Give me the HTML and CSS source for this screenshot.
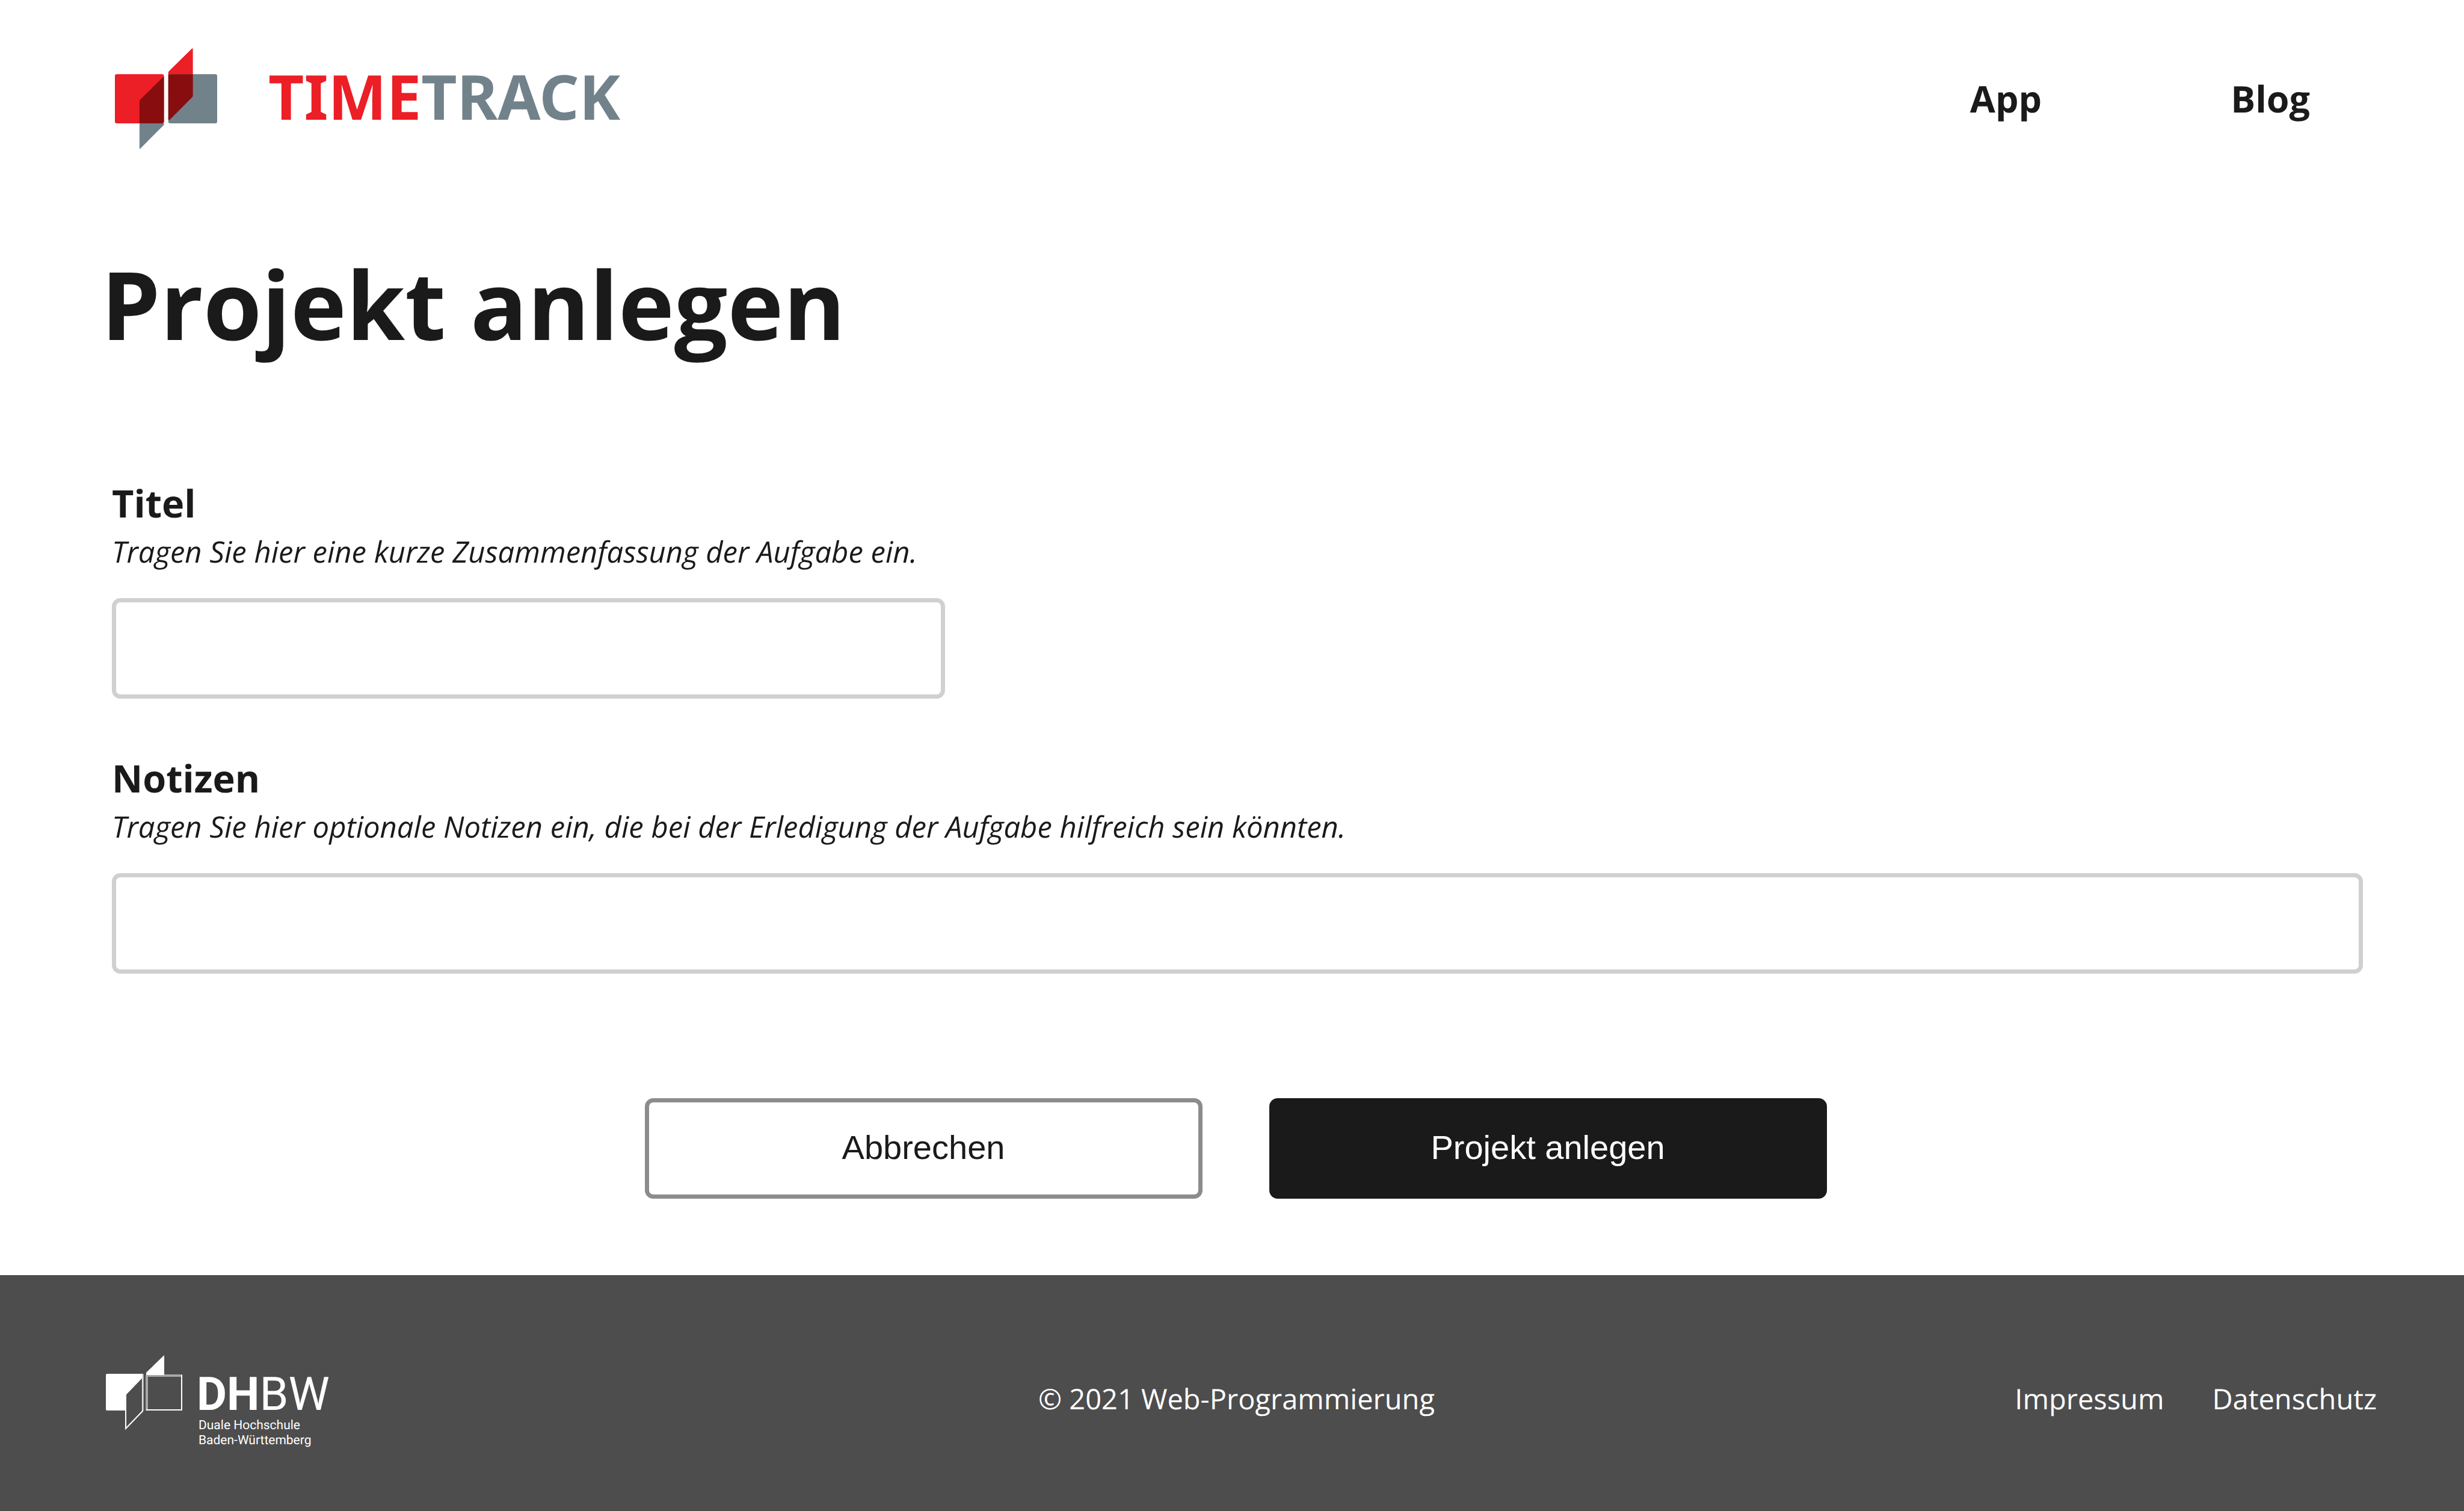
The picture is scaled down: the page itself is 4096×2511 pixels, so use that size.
FILE: index.html
```html
<!DOCTYPE html>
<html lang="de">
<head>
  <meta charset="utf-8">
  <meta name="viewport" content="width=device-width, initial-scale=1">
  <title>Timetrack – Projekt anlegen</title>
  <link rel="stylesheet" href="styles.css">
</head>
<body>
  <header class="header">
    <a class="brand" href="#">
      <svg class="brand-mark" viewBox="115 122 636 625" aria-hidden="true">
        <rect x="115" y="282" width="305" height="306" rx="12" fill="#ec1e26"/>
        <rect x="447" y="282" width="304" height="306" rx="12" fill="#71828b"/>
        <path d="M268 588H420V597L272 746H268Z" fill="#71828b"/>
        <path d="M268 451Q268 445 272 441L417 298L420 300V576Q420 588 408 588H268Z" fill="#880d0f"/>
        <path d="M447 282V272Q448 266 452 262L594 123Q600 120 600 127V282Z" fill="#ec1e26"/>
        <path d="M447 282H600V414Q600 420 596 425L456 565Q449 571 447 563Z" fill="#880d0f"/>
      </svg>
      <span class="brand-name"><span class="brand-accent">TIME</span>TRACK</span>
    </a>
    <nav class="nav">
      <a href="#">App</a>
      <a href="#">Blog</a>
    </nav>
  </header>

  <main class="main">
    <h1 class="title">Projekt anlegen</h1>
    <form class="form">
      <div class="field">
        <label class="field-label" for="titel">Titel</label>
        <p class="field-hint" id="titel-hint">Tragen Sie hier eine kurze Zusammenfassung der Aufgabe ein.</p>
        <input class="field-input field-input-short" id="titel" type="text" aria-describedby="titel-hint">
      </div>
      <div class="field">
        <label class="field-label" for="notizen">Notizen</label>
        <p class="field-hint" id="notizen-hint">Tragen Sie hier optionale Notizen ein, die bei der Erledigung der Aufgabe hilfreich sein könnten.</p>
        <input class="field-input" id="notizen" type="text" aria-describedby="notizen-hint">
      </div>
      <div class="actions">
        <button class="button" type="button">Abbrechen</button>
        <button class="button button-primary" type="submit">Projekt anlegen</button>
      </div>
    </form>
  </main>

  <footer class="footer">
    <svg class="footer-logo" viewBox="-16 0 386 146">
      <path d="M2 32H62V36L33 66V93H2Q0 93 0 91V34Q0 32 2 32Z" fill="#fff"/>
      <path d="M33 66L61 37V94L33 123Z" fill="none" stroke="#fff" stroke-width="2"/>
      <path d="M62 33V93" stroke="#b5b5b5" stroke-width="2"/>
      <path d="M68 93V34M67 35H127" fill="none" stroke="#a8a8a8" stroke-width="4"/>
      <path d="M67 92H126V34" fill="none" stroke="#fff" stroke-width="2"/>
      <path d="M67 34V30L97 1V34Z" fill="#fff"/>
      <text class="logo-name" x="151" y="92"><tspan class="logo-strong">DH</tspan>BW</text>
      <text class="logo-line" x="154" y="124">Duale Hochschule</text>
      <text class="logo-line" x="154" y="149">Baden-Württemberg</text>
    </svg>
    <p class="copyright">© 2021 Web-Programmierung</p>
    <nav class="footer-nav">
      <a href="#">Impressum</a>
      <a href="#">Datenschutz</a>
    </nav>
  </footer>
</body>
</html>
```
FILE: styles.css
```css
* {
  box-sizing: border-box;
}

body {
  margin: 0;
  min-height: 100vh;
  display: flex;
  flex-direction: column;
  background: #fff;
  color: #1a1a1a;
  font-family: "Open Sans", "Noto Sans", sans-serif;
  text-rendering: geometricPrecision;
}

a {
  color: inherit;
  text-decoration: none;
}

.header {
  display: flex;
  align-items: center;
  justify-content: space-between;
  padding: 80px 256px 80px 191px;
}

.brand {
  display: flex;
  align-items: center;
  gap: 85px;
}

.brand-mark {
  display: block;
  width: 170px;
  height: 168px;
}

.brand-name {
  padding-bottom: 8px;
  color: #71828b;
  font-family: "Noto Sans", sans-serif;
  font-size: 103px;
  font-weight: 700;
  line-height: 140px;
}

.brand-accent {
  color: #ec1e26;
}

.nav {
  display: flex;
  gap: 314px;
  font-size: 61px;
  font-weight: 700;
  line-height: 84px;
}

.main {
  flex: 1;
  padding: 70px 168px 127px;
}

.title {
  margin: 0;
  font-size: 157px;
  font-weight: 700;
  line-height: 212px;
}

.form {
  display: flex;
  flex-direction: column;
  gap: 88px;
  margin-top: 182px;
  padding-left: 18px;
}

.field {
  display: flex;
  flex-direction: column;
  align-items: flex-start;
}

.field-label {
  font-size: 63px;
  font-weight: 700;
  line-height: 90px;
}

.field-hint {
  margin: 0 0 42px;
  font-size: 49px;
  font-style: italic;
  line-height: 70px;
}

.field-input {
  width: 100%;
  height: 167px;
  padding: 0 40px;
  border: 7px solid #d0d0d0;
  border-radius: 14px;
  background: #fff;
  color: inherit;
  font-family: inherit;
  font-size: 56px;
}

.field-input-short {
  width: 37%;
}

.actions {
  display: flex;
  justify-content: center;
  gap: 111px;
  margin-top: 119px;
  padding-right: 6px;
}

.button {
  width: 927px;
  height: 167px;
  padding: 0 0 4px;
  border: 7px solid #8c8c8c;
  border-radius: 14px;
  background: #fff;
  color: #1a1a1a;
  font-family: "Liberation Sans", Arial, sans-serif;
  font-size: 56px;
}

.button-primary {
  border-color: #1a1a1a;
  background: #1a1a1a;
  color: #fff;
}

.footer {
  display: grid;
  grid-template-columns: 1fr auto 1fr;
  align-items: center;
  padding: 132px 145px 114px 160px;
  background: #4d4d4d;
  color: #fff;
  font-size: 47px;
  line-height: 64px;
}

.footer-logo {
  display: block;
  width: 386px;
  height: 146px;
  overflow: visible;
  fill: #fff;
  font-family: Roboto, sans-serif;
}

.logo-name {
  font-size: 77px;
}

.logo-strong {
  font-weight: 700;
}

.logo-line {
  font-size: 21px;
}

.copyright {
  margin: 0;
}

.footer-nav {
  display: flex;
  justify-content: flex-end;
  gap: 80px;
}
```
